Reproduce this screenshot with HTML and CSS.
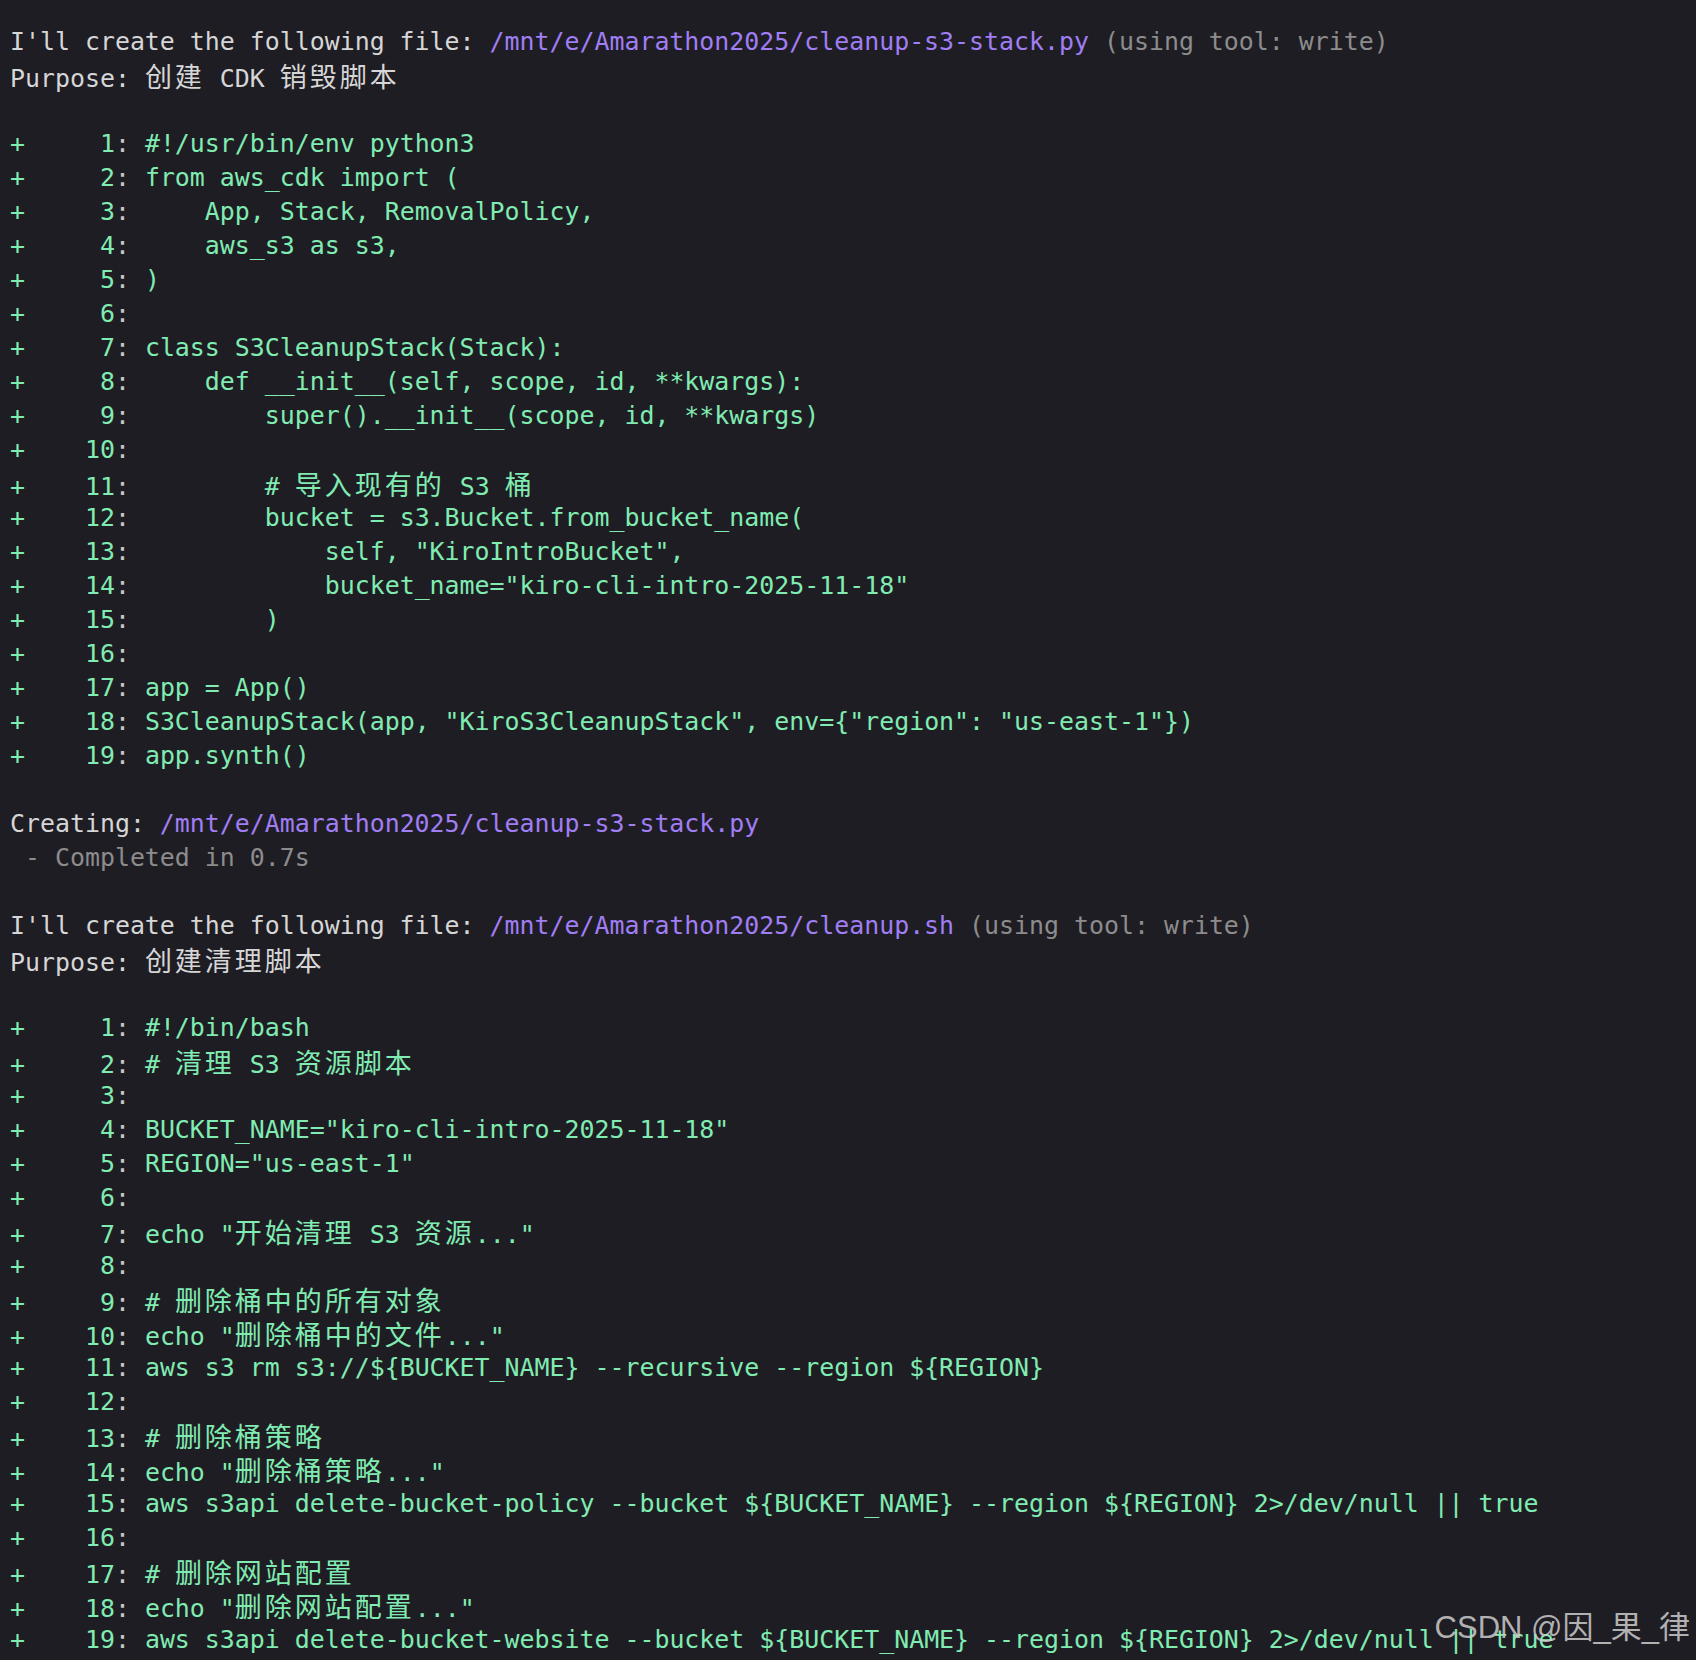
FILE: index.html
```html
<!DOCTYPE html>
<html lang="zh-CN">
<head>
<meta charset="utf-8">
<title>Terminal</title>
<link rel="stylesheet" href="styles.css">
</head>
<body>
<main class="term">
<div class="l">I'll create the following file: <span class="p">/mnt/e/Amarathon2025/cleanup-s3-stack.py</span> <span class="m">(using tool: write)</span></div>
<div class="l">Purpose: <span class="cj">创建</span> CDK <span class="cj">销毁脚本</span></div>
<div class="l"> </div>
<div class="l g">+     1<span class="c">:</span> #!/usr/bin/env python3</div>
<div class="l g">+     2<span class="c">:</span> from aws_cdk import (</div>
<div class="l g">+     3<span class="c">:</span>     App, Stack, RemovalPolicy,</div>
<div class="l g">+     4<span class="c">:</span>     aws_s3 as s3,</div>
<div class="l g">+     5<span class="c">:</span> )</div>
<div class="l g">+     6<span class="c">:</span> </div>
<div class="l g">+     7<span class="c">:</span> class S3CleanupStack(Stack):</div>
<div class="l g">+     8<span class="c">:</span>     def __init__(self, scope, id, **kwargs):</div>
<div class="l g">+     9<span class="c">:</span>         super().__init__(scope, id, **kwargs)</div>
<div class="l g">+    10<span class="c">:</span> </div>
<div class="l g">+    11<span class="c">:</span>         # <span class="cj">导入现有的</span> S3 <span class="cj">桶</span></div>
<div class="l g">+    12<span class="c">:</span>         bucket = s3.Bucket.from_bucket_name(</div>
<div class="l g">+    13<span class="c">:</span>             self, "KiroIntroBucket",</div>
<div class="l g">+    14<span class="c">:</span>             bucket_name="kiro-cli-intro-2025-11-18"</div>
<div class="l g">+    15<span class="c">:</span>         )</div>
<div class="l g">+    16<span class="c">:</span> </div>
<div class="l g">+    17<span class="c">:</span> app = App()</div>
<div class="l g">+    18<span class="c">:</span> S3CleanupStack(app, "KiroS3CleanupStack", env={"region": "us-east-1"})</div>
<div class="l g">+    19<span class="c">:</span> app.synth()</div>
<div class="l"> </div>
<div class="l">Creating: <span class="p">/mnt/e/Amarathon2025/cleanup-s3-stack.py</span></div>
<div class="l m"> - Completed in 0.7s</div>
<div class="l"> </div>
<div class="l">I'll create the following file: <span class="p">/mnt/e/Amarathon2025/cleanup.sh</span> <span class="m">(using tool: write)</span></div>
<div class="l">Purpose: <span class="cj">创建清理脚本</span></div>
<div class="l"> </div>
<div class="l g">+     1<span class="c">:</span> #!/bin/bash</div>
<div class="l g">+     2<span class="c">:</span> # <span class="cj">清理</span> S3 <span class="cj">资源脚本</span></div>
<div class="l g">+     3<span class="c">:</span> </div>
<div class="l g">+     4<span class="c">:</span> BUCKET_NAME="kiro-cli-intro-2025-11-18"</div>
<div class="l g">+     5<span class="c">:</span> REGION="us-east-1"</div>
<div class="l g">+     6<span class="c">:</span> </div>
<div class="l g">+     7<span class="c">:</span> echo "<span class="cj">开始清理</span> S3 <span class="cj">资源</span>..."</div>
<div class="l g">+     8<span class="c">:</span> </div>
<div class="l g">+     9<span class="c">:</span> # <span class="cj">删除桶中的所有对象</span></div>
<div class="l g">+    10<span class="c">:</span> echo "<span class="cj">删除桶中的文件</span>..."</div>
<div class="l g">+    11<span class="c">:</span> aws s3 rm s3://${BUCKET_NAME} --recursive --region ${REGION}</div>
<div class="l g">+    12<span class="c">:</span> </div>
<div class="l g">+    13<span class="c">:</span> # <span class="cj">删除桶策略</span></div>
<div class="l g">+    14<span class="c">:</span> echo "<span class="cj">删除桶策略</span>..."</div>
<div class="l g">+    15<span class="c">:</span> aws s3api delete-bucket-policy --bucket ${BUCKET_NAME} --region ${REGION} 2&gt;/dev/null || true</div>
<div class="l g">+    16<span class="c">:</span> </div>
<div class="l g">+    17<span class="c">:</span> # <span class="cj">删除网站配置</span></div>
<div class="l g">+    18<span class="c">:</span> echo "<span class="cj">删除网站配置</span>..."</div>
<div class="l g">+    19<span class="c">:</span> aws s3api delete-bucket-website --bucket ${BUCKET_NAME} --region ${REGION} 2&gt;/dev/null || true</div>
</main>
<div class="watermark">CSDN @因_果_律</div>
</body>
</html>
```
FILE: styles.css
```css
html, body {
  margin: 0;
  padding: 0;
}
body {
  background: #1f1d24;
  min-height: 1660px;
  position: relative;
  overflow: hidden;
}
.term {
  padding: 25px 0 0 10px;
  font-family: "DejaVu Sans Mono", "Noto Sans CJK SC", monospace;
  font-size: 24.9px;
  color: #d6d6d6;
}
.l {
  white-space: pre;
  height: 34px;
  line-height: 34px;
}
.g { color: #80ecb2; }
.p { color: #a07ef4; }
.m { color: #8c8c8c; }
.c { color: #c6c6c6; }
.cj {
  font-family: "Noto Sans CJK SC", sans-serif;
  font-size: 27px;
  letter-spacing: 3px;
  line-height: 34px;
}
.watermark {
  position: absolute;
  right: 6px;
  top: 1608px;
  font-family: "Liberation Sans", "Noto Sans CJK SC", sans-serif;
  font-size: 31px;
  line-height: 40px;
  color: rgba(205, 205, 205, 0.85);
}
```
